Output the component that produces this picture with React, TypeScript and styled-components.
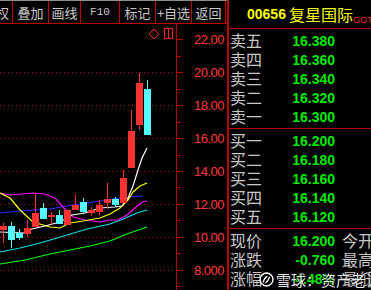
import React from 'react'
import styled, { createGlobalStyle } from 'styled-components'

const RED_LINE = '#b80000'
const AXIS_RED = '#ff3838'
const GREY_TEXT = '#c8c8c8'
const QUOTE_GREEN = '#00e800'

const GlobalStyle = createGlobalStyle`
    html, body {
        margin: 0;
        padding: 0;
        background: #000;
        overflow: hidden;
    }
`

const Screen = styled.div`
    position: relative;
    display: grid;
    grid-template-columns: 227px 1fr;
    width: 371px;
    height: 290px;
    background: #000;
    overflow: hidden;
    font-family: "Noto Sans CJK SC", "Liberation Sans", sans-serif;
`

const LeftPane = styled.div`
    display: flex;
    flex-direction: column;
    min-width: 0;
`

const Toolbar = styled.div`
    display: flex;
    height: 24px;
    box-sizing: border-box;
    border-top: 1px solid #8c8c8c;
    border-bottom: 1px solid ${RED_LINE};
`

const Tab = styled.div<{ $w: number; $clip?: boolean; $mono?: boolean }>`
    flex: none;
    width: ${p => p.$w}px;
    box-sizing: border-box;
    display: flex;
    align-items: center;
    justify-content: ${p => (p.$clip ? 'flex-end' : 'center')};
    padding-right: ${p => (p.$clip ? 3 : 0)}px;
    border-right: 1px solid ${RED_LINE};
    overflow: hidden;
    white-space: nowrap;
    color: ${GREY_TEXT};
    font-size: ${p => (p.$mono ? 11 : 13)}px;
    font-family: ${p => (p.$mono ? '"Liberation Mono", monospace' : 'inherit')};
    line-height: 1;
`

const ChartSvg = styled.svg`
    display: block;
`

const AxisLabel = styled.text`
    fill: ${AXIS_RED};
    font-family: "Liberation Sans", sans-serif;
    font-size: 13px;
    letter-spacing: -0.5px;
`

const QuotePanel = styled.div`
    display: flex;
    flex-direction: column;
    border-left: 2px solid ${RED_LINE};
    overflow: hidden;
    min-width: 0;
`

const QuoteHeader = styled.div`
    display: flex;
    align-items: center;
    height: 30px;
    padding-left: 18px;
    border-bottom: 1px solid ${RED_LINE};
    white-space: nowrap;
`

const StockCode = styled.span`
    color: #ffff00;
    font: bold 14px "Liberation Sans", sans-serif;
`

const StockName = styled.span`
    margin-left: 3px;
    color: #ffff00;
    font-size: 16px;
    line-height: 1;
`

const MarketTag = styled.span`
    align-self: flex-end;
    margin-bottom: 3px;
    color: #ff2020;
    font: 9px "Liberation Sans", sans-serif;
`

const Section = styled.div<{ $last?: boolean }>`
    padding: 2px 0;
    border-bottom: ${p => (p.$last ? 'none' : `1px solid ${RED_LINE}`)};
`

const Row = styled.div`
    display: flex;
    align-items: center;
    height: 19px;
    padding-left: 1px;
    white-space: nowrap;
`

const Label = styled.span`
    flex: none;
    width: 32px;
    color: ${GREY_TEXT};
    font-size: 16px;
    line-height: 19px;
`

const SideLabel = styled(Label)`
    margin-left: 7px;
`

const Value = styled.span`
    flex: none;
    width: 73px;
    text-align: right;
    color: ${QUOTE_GREEN};
    font: bold 14px "Liberation Sans", sans-serif;
`

const Watermark = styled.div`
    position: absolute;
    left: 259px;
    top: 270px;
    display: flex;
    align-items: center;
    gap: 2px;
    color: rgba(255, 255, 255, 0.92);
    font-size: 15px;
    line-height: 19px;
    white-space: nowrap;
    text-shadow: 0 0 2px #000, 0 0 1px #000;
`

const tabs = [
    { text: '复权', w: 13, clip: true },
    { text: '叠加', w: 36 },
    { text: '画线', w: 32 },
    { text: 'F10', w: 39, mono: true },
    { text: '标记', w: 36 },
    { text: '+自选', w: 36 },
    { text: '返回', w: 34 },
]

const sells = [
    ['卖五', '16.380'],
    ['卖四', '16.360'],
    ['卖三', '16.340'],
    ['卖二', '16.320'],
    ['卖一', '16.300'],
]

const buys = [
    ['买一', '16.200'],
    ['买二', '16.180'],
    ['买三', '16.160'],
    ['买四', '16.140'],
    ['买五', '16.120'],
]

const stats = [
    ['现价', '16.200', '今开'],
    ['涨跌', '-0.760', '最高'],
    ['涨幅', '-4.48%', '最低'],
]

// price -> page y
const py = (p: number) => 72.3 + (20 - p) * 16.45

// [up, bodyTop, bodyBottom, wickTop, wickBottom]
const candles: [boolean, number, number, number, number][] = [
    [true, 226, 230, 223, 243],
    [false, 226, 240, 222, 248],
    [false, 233, 238, 229, 240],
    [true, 228, 234, 220, 237],
    [true, 213, 227, 193, 227],
    [false, 208, 219, 203, 219],
    [true, 215, 217, 212, 225],
    [false, 215, 224, 210, 224],
    [true, 210, 225, 210, 225],
    [true, 205, 210, 195, 210],
    [false, 202, 212, 198, 213],
    [true, 210, 213, 207, 216],
    [true, 205, 212, 200, 215],
    [true, 199, 203, 183, 209],
    [false, 199, 205, 197, 207],
    [true, 178, 203, 170, 203],
    [true, 131, 168, 110, 168],
    [true, 83, 125, 73, 130],
    [false, 89, 135, 80, 135],
]

const averages: { color: string; pts: string }[] = [
    { color: '#00ff00', pts: '0,264 25,260 50,254 70,250 90,246 110,241 127,234 147,227' },
    { color: '#00e0e8', pts: '0,252 20,248 40,243 67,235 87,229 110,224 123,219 137,213 147,210' },
    { color: '#2828ff', pts: '0,213 20,211 50,209 67,206 87,203 107,200 127,197 143,196' },
    { color: '#ff00ff', pts: '0,193 10,195 33,193 45,194 55,198 63,207 73,217 85,220 100,222 110,220 118,220 127,215 135,208 142,202 147,201' },
    { color: '#ffff00', pts: '0,193 10,198 20,210 33,222 50,227 60,228 70,223 83,221 100,218 110,214 120,208 128,200 133,192 140,186 147,183' },
    { color: '#ffffff', pts: '0,232 24,233 32,229 45,226 60,222 72,215 85,213 100,208 115,207 122,206 128,198 133,186 138,170 142,158 147,148' },
]

const PriceChart = () => {
    const labels = [22, 20, 18, 16, 14, 12, 10, 8]
    const minor = [23, 21, 19, 17, 15, 13, 11, 9, 7]
    return (
        <ChartSvg width={227} height={266} viewBox="0 24 227 266">
            {labels.filter(p => p < 22).map(p => (
                <line key={'g' + p} x1={0} x2={176} y1={Math.round(py(p)) + 0.5} y2={Math.round(py(p)) + 0.5}
                    stroke="#a00000" strokeDasharray="1 3" />
            ))}
            <line x1={176.5} x2={176.5} y1={24} y2={290} stroke={RED_LINE} />
            {labels.map(p => (
                <line key={'t' + p} x1={176} x2={183} y1={Math.round(py(p)) + 0.5} y2={Math.round(py(p)) + 0.5} stroke={RED_LINE} />
            ))}
            {minor.map(p => (
                <line key={'m' + p} x1={176} x2={181} y1={Math.round(py(p)) + 0.5} y2={Math.round(py(p)) + 0.5} stroke={RED_LINE} />
            ))}
            {labels.map(p => (
                <AxisLabel key={'l' + p} x={224} y={py(p) + 5} textAnchor="end">
                    {p === 8 ? '8.000' : p.toFixed(2)}
                </AxisLabel>
            ))}

            {averages.map(a => (
                <polyline key={a.color} points={a.pts} fill="none" stroke={a.color} strokeWidth={1.2} />
            ))}

            {candles.map(([up, bt, bb, wt, wb], i) => {
                const color = up ? '#ff3232' : '#54fcfc'
                return (
                    <g key={i} fill={color}>
                        <rect x={8 * i + 3} y={wt} width={1} height={wb - wt} />
                        <rect x={8 * i} y={bt} width={7} height={Math.max(1, bb - bt)} />
                    </g>
                )
            })}

            <polygon points="154,29 159,34 154,39 149,34" fill="none" stroke="#ff2020" />
            <rect x={164.5} y={28.5} width={8} height={10} fill="none" stroke="#ff2020" />
            <line x1={168.5} x2={168.5} y1={28.5} y2={38.5} stroke="#ff2020" />
        </ChartSvg>
    )
}

const SnowballLogo = () => (
    <svg width={15} height={15} viewBox="0 0 15 15">
        <circle cx={7.5} cy={7.5} r={6.5} fill="none" stroke="#fff" strokeWidth={1.4} />
        <path d="M4.2 10.5 C5 7, 6.5 5, 8.5 4.5 M6.5 11 C8 10, 9.5 8, 10.8 4.8" fill="none" stroke="#fff" strokeWidth={1.3} />
    </svg>
)

export default function App() {
    return (
        <Screen>
            <GlobalStyle />
            <LeftPane>
                <Toolbar>
                    {tabs.map(t => (
                        <Tab key={t.text} $w={t.w} $clip={t.clip} $mono={t.mono}>{t.text}</Tab>
                    ))}
                </Toolbar>
                <PriceChart />
            </LeftPane>
            <QuotePanel>
                <QuoteHeader>
                    <StockCode>00656</StockCode>
                    <StockName>复星国际</StockName>
                    <MarketTag>GGT</MarketTag>
                </QuoteHeader>
                <Section>
                    {sells.map(([l, v]) => (
                        <Row key={l}><Label>{l}</Label><Value>{v}</Value></Row>
                    ))}
                </Section>
                <Section>
                    {buys.map(([l, v]) => (
                        <Row key={l}><Label>{l}</Label><Value>{v}</Value></Row>
                    ))}
                </Section>
                <Section $last>
                    {stats.map(([l, v, s]) => (
                        <Row key={l}><Label>{l}</Label><Value>{v}</Value><SideLabel>{s}</SideLabel></Row>
                    ))}
                </Section>
            </QuotePanel>
            <Watermark>
                <SnowballLogo />
                <span>雪球：资产老诚</span>
            </Watermark>
        </Screen>
    )
}
